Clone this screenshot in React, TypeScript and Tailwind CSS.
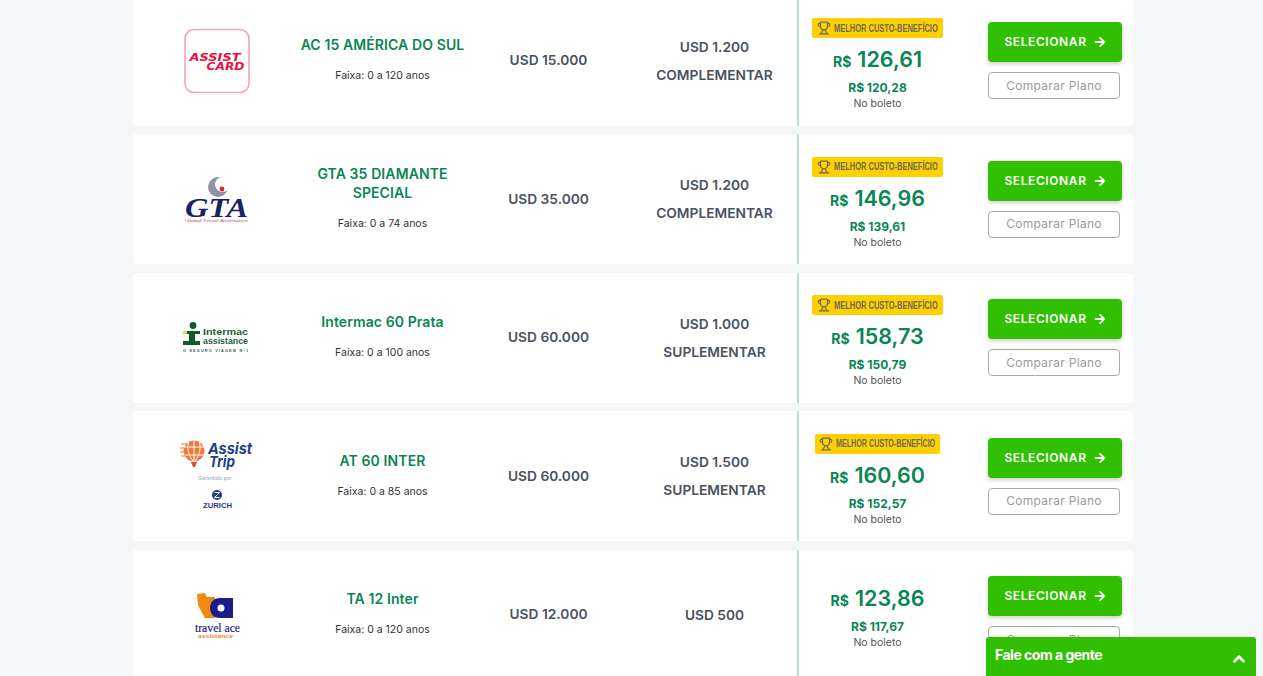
import { ChevronUp, Trophy } from 'lucide-react';
import { FaArrowRight } from 'react-icons/fa';

function AssistCardLogo() {
  return (
    <svg width="68" height="66" viewBox="0 0 68 66">
      <rect x="2" y="1.500" width="64" height="63" rx="9" fill="#fff" stroke="#f7a3b3" strokeWidth="1.600" />
      <text x="6.500" y="32.500" fontFamily="'DejaVu Sans', sans-serif" fontWeight="700" fontStyle="italic" fontSize="10" fill="#e8103c" textLength="51" lengthAdjust="spacingAndGlyphs">ASSIST</text>
      <text x="23.500" y="41.500" fontFamily="'DejaVu Sans', sans-serif" fontWeight="700" fontStyle="italic" fontSize="10" fill="#e8103c" textLength="38" lengthAdjust="spacingAndGlyphs">CARD</text>
    </svg>
  );
}

function GtaLogo() {
  return (
    <svg width="68" height="48" viewBox="0 0 68 48">
      <circle cx="35" cy="12" r="10" fill="#8d95a8" />
      <circle cx="39.500" cy="9.500" r="7.500" fill="#fff" />
      <circle cx="39" cy="14" r="2.400" fill="#e8202c" />
      <text x="2" y="42" fontFamily="'Liberation Serif', serif" fontWeight="700" fontStyle="italic" fontSize="28" fill="#1a1f66" textLength="63" lengthAdjust="spacingAndGlyphs">GTA</text>
      <text x="2" y="46.500" fontFamily="'Liberation Sans', sans-serif" fontSize="3.600" fill="#d8505a" textLength="63" lengthAdjust="spacingAndGlyphs">Global Travel Assistance</text>
    </svg>
  );
}

function IntermacLogo() {
  return (
    <svg width="70" height="32" viewBox="0 0 70 32">
      <circle cx="11" cy="3.500" r="3.400" fill="#0f5a2a" />
      <path d="M1 9h17v3h-5v7h5v4H1v-4h6v-7H5v-3z" fill="#0f5a2a" />
      <path d="M1 9h4v3H1z" fill="#e9d23a" />
      <text x="21" y="13" fontFamily="'Liberation Sans', sans-serif" fontWeight="700" fontSize="9.500" fill="#1c5f3c" textLength="45" lengthAdjust="spacingAndGlyphs">Intermac</text>
      <text x="21" y="22" fontFamily="'Liberation Sans', sans-serif" fontWeight="700" fontSize="9.500" fill="#1c5f3c" textLength="45" lengthAdjust="spacingAndGlyphs">assistance</text>
      <text x="1" y="30" fontFamily="'Liberation Sans', sans-serif" fontWeight="700" fontSize="3.800" fill="#2c5f48" textLength="65" lengthAdjust="spacing">O SEGURO VIAGEM Nº1</text>
    </svg>
  );
}

function AssistTripLogo() {
  return (
    <svg width="76" height="76" viewBox="0 0 76 76">
      <circle cx="15" cy="13" r="10.500" fill="#f2793a" />
      <path d="M5 9h20M5 17h20M15 2.500v21M9.500 4q-3 9 5.500 21M20.500 4q3 9-5.500 21" stroke="#fff" strokeWidth="1" fill="none" />
      <path d="M2 6h5M1 10h4M1 14h4M2 18h5" stroke="#f2793a" strokeWidth="1.200" />
      <path d="M12 24h6l-2 5h-2z" fill="#e8423a" />
      <text x="29" y="16" fontFamily="'Inter', sans-serif" fontWeight="700" fontStyle="italic" fontSize="15" fill="#1d3f87" textLength="44" lengthAdjust="spacingAndGlyphs">Assist</text>
      <text x="30" y="29" fontFamily="'Inter', sans-serif" fontWeight="700" fontStyle="italic" fontSize="15" fill="#1d3f87" textLength="26" lengthAdjust="spacingAndGlyphs">Trip</text>
      <text x="19" y="42" fontFamily="'Inter', sans-serif" fontSize="5" fill="#9aa4b5" textLength="34" lengthAdjust="spacingAndGlyphs">Garantido por</text>
      <circle cx="38" cy="57" r="5" fill="#24398f" />
      <path d="M35.500 54.500h5l-5 5h5" stroke="#fff" strokeWidth="1" fill="none" />
      <text x="24" y="70" fontFamily="'Liberation Sans', sans-serif" fontWeight="700" fontSize="7" fill="#24398f" textLength="29" lengthAdjust="spacingAndGlyphs">ZURICH</text>
    </svg>
  );
}

function TravelAceLogo() {
  return (
    <svg width="64" height="48" viewBox="-8 0 64 48">
      <path d="M4 3L12 2L14 6H22V27H12C9 22 7 18 5 14z" fill="#f28a12" />
      <path d="M40 7V27H27C20 27 17 22 17 17C17 11 21 7 27 7z" fill="#1c1a8c" />
      <circle cx="28" cy="17" r="3.500" fill="#fff" />
      <text x="2" y="41" fontFamily="'Liberation Serif', serif" fontSize="13.500" fill="#1c1a8c" stroke="#1c1a8c" strokeWidth="0.200" textLength="45" lengthAdjust="spacingAndGlyphs">travel ace</text>
      <text x="5" y="47" fontFamily="'Liberation Sans', sans-serif" fontWeight="700" fontSize="5.500" fill="#f28a12" textLength="35" lengthAdjust="spacingAndGlyphs">assistance</text>
    </svg>
  );
}

const plans = [
  { logo: <AssistCardLogo />, name: 'AC 15 AMÉRICA DO SUL', age: 'Faixa: 0 a 120 anos', coverage: 'USD 15.000', extra: ['USD 1.200', 'COMPLEMENTAR'], price: '126,61', boleto: 'R$ 120,28', badge: 'w-[131px]', badgeText: 'w-[104px] scale-x-[0.68]' },
  { logo: <GtaLogo />, name: 'GTA 35 DIAMANTE SPECIAL', age: 'Faixa: 0 a 74 anos', coverage: 'USD 35.000', extra: ['USD 1.200', 'COMPLEMENTAR'], price: '146,96', boleto: 'R$ 139,61', badge: 'w-[131px]', badgeText: 'w-[104px] scale-x-[0.68]' },
  { logo: <IntermacLogo />, name: 'Intermac 60 Prata', age: 'Faixa: 0 a 100 anos', coverage: 'USD 60.000', extra: ['USD 1.000', 'SUPLEMENTAR'], price: '158,73', boleto: 'R$ 150,79', badge: 'w-[131px]', badgeText: 'w-[104px] scale-x-[0.68]' },
  { logo: <AssistTripLogo />, name: 'AT 60 INTER', age: 'Faixa: 0 a 85 anos', coverage: 'USD 60.000', extra: ['USD 1.500', 'SUPLEMENTAR'], price: '160,60', boleto: 'R$ 152,57', badge: 'w-[125px]', badgeText: 'w-[100px] scale-x-[0.65]' },
  { logo: <TravelAceLogo />, name: 'TA 12 Inter', age: 'Faixa: 0 a 120 anos', coverage: 'USD 12.000', extra: ['USD 500'], price: '123,86', boleto: 'R$ 117,67', badge: '', badgeText: '' },
];

export default function App() {
  return (
    <div className="h-screen overflow-hidden bg-[#f4f6f8] font-['Inter',sans-serif]">
      <div className="ml-[133px] -mt-[4.500px] flex w-[1000px] flex-col gap-[8.500px]">
        {plans.map((plan) => (
          <div key={plan.name} className="grid h-[130px] shrink-0 grid-cols-[167px_165px_167px_165px_161px_175px] items-center rounded-[4px] bg-white">
            <div className="flex justify-center">{plan.logo}</div>
            <div className="flex flex-col items-center pb-[2px] text-center">
              <div className="text-[14px] font-semibold leading-[19px] tracking-[0.1px] text-[#0a8554]">{plan.name}</div>
              <div className="mt-[14px] text-[10.500px] leading-[16px] text-[#333]">{plan.age}</div>
            </div>
            <div className="text-center text-[13.750px] font-semibold text-[#4a5260]">{plan.coverage}</div>
            <div className="text-center text-[13.750px] font-semibold leading-[28px] text-[#4a5260]">
              {plan.extra.map((line) => (
                <div key={line}>{line}</div>
              ))}
            </div>
            <div className={`flex h-full flex-col items-center justify-center border-l-2 border-[#bfdcd6] pr-[2px] ${plan.badge ? 'pt-[9px]' : 'pt-[4px]'}`}>
              {plan.badge && (
                <div className={`${plan.badge} mb-[6px] flex h-[20px] items-center justify-center gap-[3px] rounded-[2px] bg-[#ffd000] text-[#6e6a5a]`}>
                  <Trophy size={14} strokeWidth={2} />
                  <span className={`${plan.badgeText} origin-left whitespace-nowrap font-['Liberation_Sans',sans-serif] text-[11px] font-bold leading-none`}>MELHOR CUSTO-BENEFÍCIO</span>
                </div>
              )}
              <div className="flex items-baseline gap-[6px] font-semibold text-[#0a8554]">
                <span className="text-[14px] font-bold">R$</span>
                <span className="text-[21.500px] leading-[30px]">{plan.price}</span>
              </div>
              <div className="mt-[6px] text-[12px] font-bold leading-[16px] text-[#0a8554]">{plan.boleto}</div>
              <div className="text-[10.500px] leading-[16px] text-[#555]">No boleto</div>
            </div>
            <div className="flex flex-col pl-[30px]">
              <button className="flex h-[40px] w-[134px] items-center justify-center gap-[7px] rounded-[4px] bg-[#30c000] text-[12px] font-semibold tracking-[0.6px] text-white shadow-[0_2px_4px_rgba(0,0,0,0.2)]">
                SELECIONAR
                <FaArrowRight size={12} />
              </button>
              <button className="mt-[10px] h-[27px] w-[132px] rounded-[4px] border border-[#aaa] bg-white text-[12px] tracking-[0.3px] text-[#9b9b9b]">
                Comparar Plano
              </button>
            </div>
          </div>
        ))}
      </div>
      <div className="fixed bottom-0 right-[7px] flex h-[39px] w-[270px] items-center justify-between rounded-t-[3px] bg-[#30c000] pb-[4px] pl-[9px] pr-[8px] text-white">
        <span className="text-[14px] font-bold tracking-[-0.5px]">Fale com a gente</span>
        <ChevronUp size={18} strokeWidth={3.500} className="mt-[9px]" />
      </div>
    </div>
  );
}
